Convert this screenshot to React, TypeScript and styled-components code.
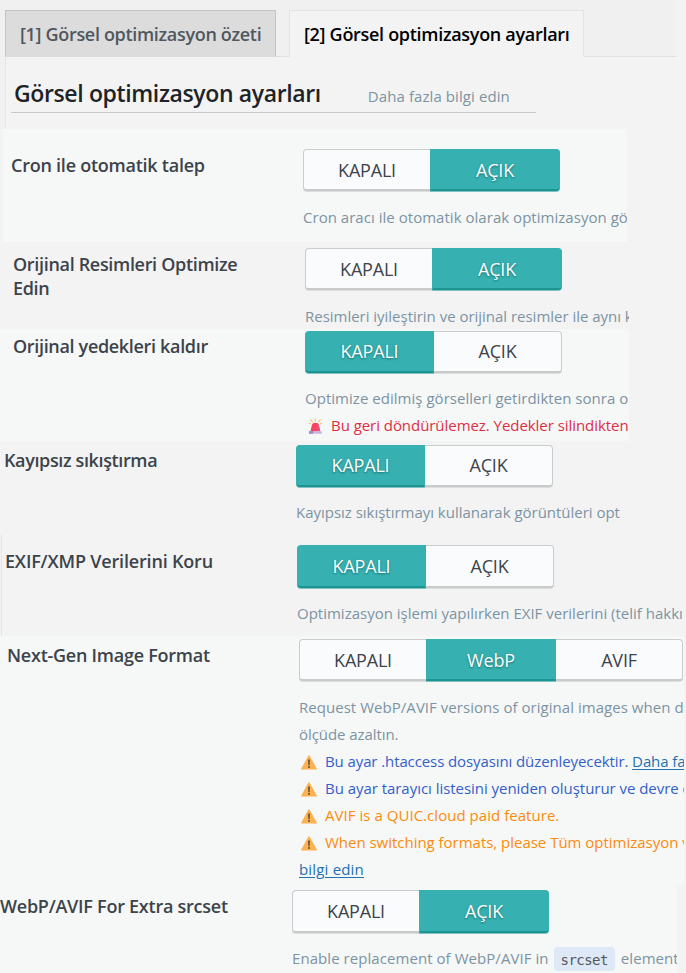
import React from 'react';
import styled, { createGlobalStyle } from 'styled-components';

const Global = createGlobalStyle`
  *, *::before, *::after { box-sizing: border-box; }
  body {
    margin: 0;
    background: #f3f3f3;
    font-family: "Open Sans", "Noto Sans", sans-serif;
    font-variant-ligatures: none;
    overflow: hidden;
  }
`;

const Page = styled.main`
  width: 686px;
  height: 973px;
  overflow: hidden;
  background: #f3f3f3;
`;

const Header = styled.header`
  width: 676px;
  height: 129px;
  display: flex;
  flex-direction: column;
  padding-top: 10px;
  background: #f0f0f1;
`;

const Tabs = styled.nav`
  display: flex;
  flex: none;
  height: 47px;
  padding-left: 5px;
`;

const Tab = styled.a<{ $active?: boolean; $width: number; $tracking: number }>`
  width: ${(p) => p.$width}px;
  height: 47px;
  padding: 0 0 0 14px;
  border: 1px solid ${(p) => (p.$active ? '#e3e3e4' : '#c3c4c7')};
  border-bottom-color: ${(p) => (p.$active ? '#f3f3f3' : '#dcdcde')};
  background: ${(p) => (p.$active ? '#f3f3f3' : '#dcdcdc')};
  color: ${(p) => (p.$active ? '#000' : '#50575e')};
  font-size: 18px;
  font-weight: 600;
  line-height: 47px;
  letter-spacing: ${(p) => p.$tracking}px;
  white-space: nowrap;
`;

const TabRule = styled.span<{ $width?: number }>`
  flex: ${(p) => (p.$width ? 'none' : '1')};
  width: ${(p) => (p.$width ? `${p.$width}px` : 'auto')};
  border-bottom: 1px solid #e0e0e1;
`;

const TitleArea = styled.div`
  flex: 1;
  margin-left: 5px;
  margin-right: -10px;
  padding-left: 5px;
  background: #f3f3f3;
  border-left: 1px solid #e6e6e7;
`;

const TitleBar = styled.div`
  display: flex;
  align-items: baseline;
  gap: 47px;
  width: 525px;
  height: 56px;
  padding-left: 3px;
  border-bottom: 1px solid #c9c9c9;
`;

const Title = styled.h1`
  margin: 0;
  font-size: 23px;
  font-weight: 600;
  line-height: 72px;
  letter-spacing: -0.37px;
  color: #1d2327;
  white-space: nowrap;
`;

const LearnMore = styled.a`
  font-size: 15px;
  letter-spacing: 0.08px;
  color: #7c93a3;
  white-space: nowrap;
`;

const Row = styled.section<{
  $height: number;
  $width: number;
  $labelWidth: number;
  $tinted?: boolean;
  $inset?: number;
  $edge?: boolean;
}>`
  display: grid;
  grid-template-columns: ${(p) => p.$labelWidth}px minmax(0, 1fr);
  width: ${(p) => p.$width}px;
  height: ${(p) => p.$height}px;
  margin-left: ${(p) => p.$inset ?? 0}px;
  overflow: hidden;
  background: ${(p) => (p.$tinted ? '#f6f8f7' : '#f3f3f3')};
  border-left: ${(p) => (p.$edge ? '1px solid #e3e3e4' : 'none')};
`;

const Label = styled.h2<{ $top: number; $left: number; $tracking: number }>`
  margin: 0;
  padding: ${(p) => p.$top}px 0 0 ${(p) => p.$left}px;
  font-size: 18px;
  font-weight: 600;
  line-height: 24px;
  letter-spacing: ${(p) => p.$tracking}px;
  color: #3c434a;
  white-space: nowrap;
`;

const Field = styled.div<{ $top: number }>`
  padding-top: ${(p) => p.$top}px;
`;

const Switch = styled.div<{ $height: number; $gap: number }>`
  display: flex;
  width: max-content;
  height: ${(p) => p.$height}px;
  margin-bottom: ${(p) => p.$gap}px;
`;

const Option = styled.button<{ $on: boolean; $wide: number; $low?: boolean }>`
  width: ${(p) => p.$wide}px;
  padding: ${(p) => (p.$low ? '1px 0 0' : '0 0 1px')};
  border: 1px solid ${(p) => (p.$on ? '#36b0b0' : '#cbcccd')};
  border-bottom: 2px solid ${(p) => (p.$on ? '#1c9491' : '#c9caca')};
  border-left-width: ${(p) => (p.$on ? 1 : 0)}px;
  border-right-width: ${(p) => (p.$on ? 1 : 0)}px;
  background: ${(p) => (p.$on ? '#36b0b0' : '#fafbfc')};
  box-shadow: 0 1px 0 ${(p) => (p.$on ? '#7fc2c0' : '#dcdddd')};
  height: calc(100% - 1px);
  color: ${(p) => (p.$on ? '#fff' : '#3c434a')};
  font-family: inherit;
  font-size: 18px;
  letter-spacing: -0.2px;
  text-shadow: ${(p) => (p.$on ? '0 1px 2px rgba(0, 70, 70, 0.6)' : 'none')};

  &:first-child {
    border-left-width: 1px;
    border-radius: 4px 0 0 4px;
  }
  &:last-child {
    border-right-width: 1px;
    border-radius: 0 4px 4px 0;
  }
`;

const tones = { muted: '#7c93a3', danger: '#dc2f45', info: '#335fcb', warning: '#fb8b0b' };

const Line = styled.p<{ $tone?: keyof typeof tones; $tracking: number }>`
  display: flex;
  align-items: center;
  height: 27px;
  margin: 0;
  font-size: 15px;
  line-height: 27px;
  letter-spacing: ${(p) => p.$tracking}px;
  white-space: pre;
  color: ${(p) => tones[p.$tone ?? 'muted']};
`;

const Link = styled.a`
  color: #2271b1;
  text-decoration: underline;
  text-underline-offset: 2px;
`;

const Code = styled.code`
  height: 24px;
  margin: 0 6px 0 1px;
  padding: 0 7px;
  border-radius: 4px;
  background: #dee8f7;
  color: #50575e;
  font: 14px/26px "DejaVu Sans Mono", monospace;
  letter-spacing: -0.55px;
`;

const SirenSvg = styled.svg`
  flex: none;
  margin: 0 8px 0 3px;
`;

const WarnSvg = styled.svg`
  flex: none;
  margin: 1px 8px 0 2px;
`;

const Siren = () => (
  <SirenSvg width="15" height="16" viewBox="0 0 15 16">
    <path d="M7.3 0.3v3.4M2.2 1.4l2.4 2.8M12.6 1.4l-2.4 2.8M0.8 5l2 1M14 5l-2 1" stroke="#f5c56b" strokeWidth="1.1" fill="none" />
    <path d="M3.9 7Q4.3 4.9 5.9 4.9h2.9q1.6 0 2 2.1l1.5 6.5H2.4z" fill="#f8455d" />
    <path d="M8.4 4.9h.4q1.6 0 2 2.1l1.5 6.5H9.4z" fill="#e9527c" />
    <path d="M1.3 13h12.2l.5 2.7H.8z" fill="#cbb6e0" />
    <path d="M1.3 13h4l-.3 2.7H.8z" fill="#a18dba" />
  </SirenSvg>
);

const Warn = () => (
  <WarnSvg width="16" height="15" viewBox="0 0 16 15">
    <path d="M7.2 1q.8-1.3 1.6 0l7 12.6q.4 1-.6 1H.8q-1 0-.6-1z" fill="#fdb252" />
    <path d="M7.2 4.6h1.6l-.2 5.6H7.4z" fill="#50402f" />
    <circle cx="8" cy="12" r=".9" fill="#50402f" />
  </WarnSvg>
);

interface ToggleProps {
  options: string[];
  value: string;
  height?: number;
  gap?: number;
  low?: boolean;
}

const Toggle = ({ options, value, height = 43, gap = 12, low }: ToggleProps) => (
  <Switch $height={height} $gap={gap}>
    {options.map((name, i) => {
      const on = name === value;
      return (
        <Option key={name} type="button" $on={on} $low={low} $wide={on ? (i === 0 ? 129 : 130) : i === 0 ? 127 : options.length === 3 ? 127 : 128}>
          {name}
        </Option>
      );
    })}
  </Switch>
);

const onOff = ['KAPALI', 'AÇIK'];

export default function App() {
  return (
    <Page>
      <Global />
      <Header>
        <Tabs>
          <Tab $width={271} $tracking={-0.32}>[1] Görsel optimizasyon özeti</Tab>
          <TabRule $width={13} />
          <Tab $active $width={295} $tracking={-0.3}>[2] Görsel optimizasyon ayarları</Tab>
          <TabRule />
        </Tabs>
        <TitleArea>
          <TitleBar>
            <Title>Görsel optimizasyon ayarları</Title>
            <LearnMore>Daha fazla bilgi edin</LearnMore>
          </TitleBar>
        </TitleArea>
      </Header>

      <Row $tinted $inset={3} $width={624} $height={113} $labelWidth={300}>
        <Label $top={24} $left={8} $tracking={-0.24}>Cron ile otomatik talep</Label>
        <Field $top={20}>
          <Toggle options={onOff} value="AÇIK" low />
          <Line $tracking={0.03}>Cron aracı ile otomatik olarak optimizasyon gö</Line>
        </Field>
      </Row>

      <Row $width={629} $height={87} $labelWidth={305}>
        <Label $top={10} $left={13} $tracking={-0.32}>Orijinal Resimleri Optimize<br />Edin</Label>
        <Field $top={6}>
          <Toggle options={onOff} value="AÇIK" low />
          <Line $tracking={-0.02}>Resimleri iyileştirin ve orijinal resimler ile aynı k</Line>
        </Field>
      </Row>

      <Row $tinted $width={629} $height={112} $labelWidth={305}>
        <Label $top={5} $left={13} $tracking={-0.33}>Orijinal yedekleri kaldır</Label>
        <Field $top={2}>
          <Toggle options={onOff} value="KAPALI" gap={11} />
          <Line $tracking={0.03}>Optimize edilmiş görselleri getirdikten sonra o</Line>
          <Line $tone="danger" $tracking={-0.05}><Siren />Bu geri döndürülemez. Yedekler silindikten</Line>
        </Field>
      </Row>

      <Row $width={686} $height={94} $labelWidth={296}>
        <Label $top={7} $left={4} $tracking={-0.37}>Kayıpsız sıkıştırma</Label>
        <Field $top={4}>
          <Toggle options={onOff} value="KAPALI" gap={11} />
          <Line $tracking={-0.02}>Kayıpsız sıkıştırmayı kullanarak görüntüleri opt</Line>
        </Field>
      </Row>

      <Row $edge $inset={1} $width={685} $height={101} $labelWidth={295}>
        <Label $top={14} $left={3} $tracking={-0.18}>EXIF/XMP Verilerini Koru</Label>
        <Field $top={10}>
          <Toggle options={onOff} value="KAPALI" height={44} gap={11} />
          <Line $tracking={0}>Optimizasyon işlemi yapılırken EXIF verilerini (telif hakkı</Line>
        </Field>
      </Row>

      <Row $tinted $width={684} $height={249} $labelWidth={299}>
        <Label $top={7} $left={7} $tracking={-0.25}>Next-Gen Image Format</Label>
        <Field $top={3}>
          <Toggle options={['KAPALI', 'WebP', 'AVIF']} value="WebP" low />
          <Line $tracking={0.04}>Request WebP/AVIF versions of original images when d</Line>
          <Line $tracking={-0.07}>ölçüde azaltın.</Line>
          <Line $tone="info" $tracking={-0.1}><Warn />Bu ayar .htaccess dosyasını düzenleyecektir. <Link>Daha fa</Link></Line>
          <Line $tone="info" $tracking={-0.04}><Warn />Bu ayar tarayıcı listesini yeniden oluşturur ve devre d</Line>
          <Line $tone="warning" $tracking={0.04}><Warn />AVIF is a QUIC.cloud paid feature.</Line>
          <Line $tone="warning" $tracking={-0.02}><Warn />When switching formats, please Tüm optimizasyon v</Line>
          <Line $tracking={0.18}><Link>bilgi edin</Link></Line>
        </Field>
      </Row>

      <Row $tinted $width={677} $height={88} $labelWidth={292}>
        <Label $top={9} $left={0} $tracking={-0.25}>WebP/AVIF For Extra srcset</Label>
        <Field $top={5}>
          <Toggle options={onOff} value="AÇIK" height={44} gap={11} />
          <Line $tracking={0.06}>Enable replacement of WebP/AVIF in <Code>srcset</Code>element</Line>
        </Field>
      </Row>
    </Page>
  );
}
